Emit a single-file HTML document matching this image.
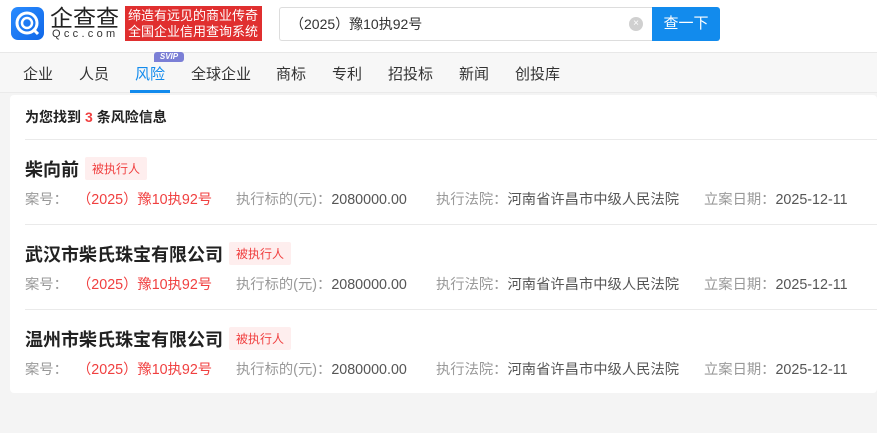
<!DOCTYPE html>
<html><head><meta charset="utf-8"><style>
*{margin:0;padding:0;box-sizing:border-box}
body{width:877px;height:433px;overflow:hidden;background:#f4f4f4;font-family:"Liberation Sans","Noto Sans CJK SC",sans-serif;position:relative}
.hdr{position:absolute;left:0;top:0;width:877px;height:53px;background:#fff;border-bottom:1px solid #e8e8e8}
.logo{position:absolute;left:11px;top:7px;width:33px;height:33px;border-radius:7px;background:linear-gradient(135deg,#2a8cff,#1067e8)}
.brand{position:absolute;left:50px;top:5px;font-size:23px;color:#222;letter-spacing:0;line-height:26px}
.dom{position:absolute;left:52px;top:28px;font-size:11px;color:#333;letter-spacing:3.3px}
.slogan{position:absolute;left:125px;top:6px;width:137px;height:35px;background:#e02f2f;color:#fff;font-size:13px;line-height:16px;padding:2px 0 0 3px}
.search{position:absolute;left:279px;top:7px;width:374px;height:34px;border:1px solid #ddd;border-right:none;border-radius:3px 0 0 3px;font-size:14px;color:#333;line-height:32px;padding-left:10px}
.clr{position:absolute;left:629px;top:17px;width:14px;height:14px;border-radius:50%;background:#d0d0d0;color:#fff;font-size:10px;line-height:14px;text-align:center}
.btn{position:absolute;left:652px;top:7px;width:68px;height:34px;background:#128bed;border-radius:0 3px 3px 0;color:#fff;font-size:15px;line-height:34px;text-align:center}
.nav{position:absolute;left:0;top:53px;width:877px;height:40px;background:#f7f7f7;border-bottom:1px solid #eaeaea}
.nav span{position:absolute;top:10px;font-size:15px;color:#333}
.svip{position:absolute;left:154px;top:-1px;width:30px;height:10px;background:#7b7fd6;color:#fff;font-size:8px;font-weight:bold;font-style:italic;line-height:10px;text-align:center;border-radius:3px 3px 3px 0}
.uline{position:absolute;left:130px;top:37px;width:40px;height:3px;background:#128bed}
.card{position:absolute;left:10px;top:95px;width:867px;height:298px;background:#fff;border-radius:4px}
.tt{position:absolute;left:15px;top:12px;font-size:14px;font-weight:bold;color:#222}
.tt b{color:#f04040;margin:0 4px}
.sep{position:absolute;left:15px;width:852px;height:1px;background:#eaeaea}
.name{position:absolute;left:15px;font-size:18px;font-weight:bold;color:#222}
.tag{display:inline-block;vertical-align:3px;margin-left:6px;font-size:12px;font-weight:normal;color:#f04040;background:#feeeee;padding:3px 7px;border-radius:2px}
.meta{position:absolute;left:15px;font-size:14.3px;color:#999;white-space:nowrap}
.meta i{font-style:normal;position:absolute;top:0}
.r{color:#f04040}.d{color:#555}
</style></head><body>
<div class="hdr">
<div class="logo"><svg width="33" height="33" viewBox="0 0 33 33"><circle cx="16" cy="16" r="10" fill="none" stroke="#fff" stroke-width="3"/><circle cx="16" cy="16" r="5" fill="none" stroke="#fff" stroke-width="2.5"/><path d="M22 22 L27 27" stroke="#fff" stroke-width="3"/></svg></div>
<div class="brand">企查查</div>
<div class="dom">Qcc.com</div>
<div class="slogan">缔造有远见的商业传奇<br>全国企业信用查询系统</div>
<div class="search">（2025）豫10执92号</div>
<div class="clr">×</div>
<div class="btn">查一下</div>
</div>
<div class="nav">
<span style="left:23px">企业</span><span style="left:79px">人员</span><span style="left:135px;color:#128bed">风险</span><span style="left:191px">全球企业</span><span style="left:276px">商标</span><span style="left:332px">专利</span><span style="left:388px">招投标</span><span style="left:459px">新闻</span><span style="left:515px">创投库</span>
<div class="svip">SVIP</div><div class="uline"></div>
</div>
<div class="card">
<div class="tt">为您找到<b>3</b>条风险信息</div>
<div class="sep" style="top:44px"></div>
<div class="name" style="top:61px">柴向前<span class="tag">被执行人</span></div>
<div class="meta" style="top:93px"><i style="left:0">案号：</i><i class="r" style="left:52px">（2025）豫10执92号</i><i style="left:211px">执行标的(元)：<span class="d">2080000.00</span></i><i style="left:411px">执行法院：<span class="d">河南省许昌市中级人民法院</span></i><i style="left:679px">立案日期：<span class="d">2025-12-11</span></i></div>
<div class="sep" style="top:129px"></div>
<div class="name" style="top:146px">武汉市柴氏珠宝有限公司<span class="tag">被执行人</span></div>
<div class="meta" style="top:178px"><i style="left:0">案号：</i><i class="r" style="left:52px">（2025）豫10执92号</i><i style="left:211px">执行标的(元)：<span class="d">2080000.00</span></i><i style="left:411px">执行法院：<span class="d">河南省许昌市中级人民法院</span></i><i style="left:679px">立案日期：<span class="d">2025-12-11</span></i></div>
<div class="sep" style="top:214px"></div>
<div class="name" style="top:231px">温州市柴氏珠宝有限公司<span class="tag">被执行人</span></div>
<div class="meta" style="top:263px"><i style="left:0">案号：</i><i class="r" style="left:52px">（2025）豫10执92号</i><i style="left:211px">执行标的(元)：<span class="d">2080000.00</span></i><i style="left:411px">执行法院：<span class="d">河南省许昌市中级人民法院</span></i><i style="left:679px">立案日期：<span class="d">2025-12-11</span></i></div>
</div>
</body></html>
